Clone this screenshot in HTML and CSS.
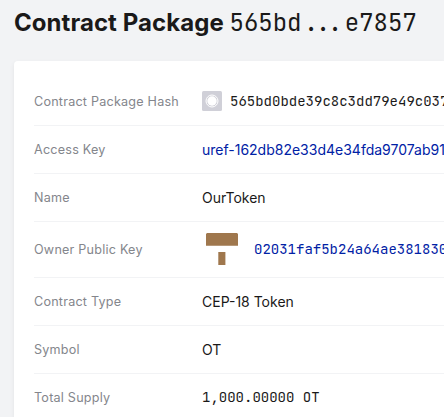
FILE: index.html
```html
<!DOCTYPE html>
<html lang="en">
<head>
<meta charset="utf-8">
<title>Contract Package</title>
<link rel="stylesheet" href="styles.css">
</head>
<body>
<h1 class="title">Contract Package <span class="title-hash">565bd...e7857</span></h1>
<main class="card">
  <dl class="details">
    <div class="row"><dt>Contract Package Hash</dt><dd class="mono hash"><svg class="hash-icon" width="20" height="20" viewBox="0 0 20 20"><rect width="20" height="20" rx="1.5" fill="#d0d0d8"/><circle cx="10" cy="10" r="6" fill="none" stroke="#fff" stroke-width="1"/><circle cx="10" cy="10" r="4.7" fill="#fff"/></svg><span>565bd0bde39c8c3dd79e49c037</span></dd></div>
    <div class="row"><dt>Access Key</dt><dd><a class="link">uref-162db82e33d4e34fda9707ab91</a></dd></div>
    <div class="row"><dt>Name</dt><dd>OurToken</dd></div>
    <div class="row row-owner"><dt>Owner Public Key</dt><dd class="mono owner"><svg class="avatar" width="40" height="40" viewBox="0 0 40 40"><path d="M5 4h30l1 1v11.8H4V5zM16.3 23h7.1v13h-7.1z" fill="#9f774d"/></svg><a class="link">02031faf5b24a64ae381830</a></dd></div>
    <div class="row"><dt>Contract Type</dt><dd>CEP-18 Token</dd></div>
    <div class="row"><dt>Symbol</dt><dd>OT</dd></div>
    <div class="row"><dt>Total Supply</dt><dd class="mono">1,000.00000 OT</dd></div>
  </dl>
</main>
</body>
</html>
```
FILE: styles.css
```css
* { box-sizing: border-box; }
body { margin: 0; height: 417px; overflow: hidden; background: #f2f3f5; color: #1a1919; font-family: Inter, sans-serif; }
.title { margin: 0; padding: 8px 0 0 14px; height: 61px; font-size: 24px; line-height: 30px; font-weight: 700; letter-spacing: 0.06px; white-space: nowrap; }
.title-hash, .mono { font-family: "JetBrains Mono", "DejaVu Sans Mono", monospace; }
.title-hash { font-weight: 400; letter-spacing: 0; }
.card { margin-left: 14px; height: 356px; padding: 16px 0 0 20px; background: #fff; border-radius: 4px 0 0 0; box-shadow: 0 2px 5px #0001; }
.details { margin: 0; overflow: hidden; }
.row { display: flex; align-items: center; height: 48px; border-top: 1px solid #f2f3f5; white-space: nowrap; }
.row:first-child { border-top: 0; }
.row:last-child { height: 47px; }
.row-owner { height: 56px; }
dt { flex: none; width: 168px; font-size: 12.6px; letter-spacing: 0.22px; color: #84868c; }
dd { margin: 0; font-size: 14px; }
.link { color: #0021a5; }
.hash, .owner { display: flex; align-items: center; }
.owner { padding-bottom: 1px; }
.hash-icon { margin-right: 8px; }
.avatar { margin-right: 12px; }
```
